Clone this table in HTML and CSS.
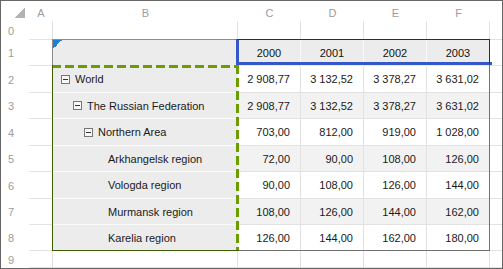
FILE: index.html
```html
<!DOCTYPE html>
<html>
<head>
<meta charset="utf-8">
<link rel="stylesheet" href="styles.css">
</head>
<body>
<div class="frame">
  <div class="stack">
  <div class="sheet">
    <!-- column letters -->
    <div class="corner"></div>
    <div class="colh">A</div>
    <div class="colh">B</div>
    <div class="colh">C</div>
    <div class="colh">D</div>
    <div class="colh">E</div>
    <div class="colh">F</div>
    <div class="colh"></div>

    <!-- row 0 -->
    <div class="rowh">0</div>
    <div class="cell"></div><div class="cell"></div><div class="cell"></div><div class="cell"></div><div class="cell"></div><div class="cell"></div><div class="cell last"></div>

    <!-- row 1 -->
    <div class="rowh">1</div>
    <div class="cell"></div>
    <div class="cell tcorner"></div>
    <div class="cell year">2000</div>
    <div class="cell year">2001</div>
    <div class="cell year">2002</div>
    <div class="cell year">2003</div>
    <div class="cell last"></div>

    <!-- row 2 -->
    <div class="rowh">2</div>
    <div class="cell"></div>
    <div class="cell label l0"><span class="tog"></span>World</div>
    <div class="cell num">2 908,77</div>
    <div class="cell num">3 132,52</div>
    <div class="cell num">3 378,27</div>
    <div class="cell num">3 631,02</div>
    <div class="cell last"></div>

    <!-- row 3 -->
    <div class="rowh">3</div>
    <div class="cell"></div>
    <div class="cell label l1"><span class="tog"></span>The Russian Federation</div>
    <div class="cell num alt">2 908,77</div>
    <div class="cell num alt">3 132,52</div>
    <div class="cell num alt">3 378,27</div>
    <div class="cell num alt">3 631,02</div>
    <div class="cell last"></div>

    <!-- row 4 -->
    <div class="rowh">4</div>
    <div class="cell"></div>
    <div class="cell label l2"><span class="tog"></span>Northern Area</div>
    <div class="cell num">703,00</div>
    <div class="cell num">812,00</div>
    <div class="cell num">919,00</div>
    <div class="cell num">1 028,00</div>
    <div class="cell last"></div>

    <!-- row 5 -->
    <div class="rowh">5</div>
    <div class="cell"></div>
    <div class="cell label leaf">Arkhangelsk region</div>
    <div class="cell num alt">72,00</div>
    <div class="cell num alt">90,00</div>
    <div class="cell num alt">108,00</div>
    <div class="cell num alt">126,00</div>
    <div class="cell last"></div>

    <!-- row 6 -->
    <div class="rowh">6</div>
    <div class="cell"></div>
    <div class="cell label leaf">Vologda region</div>
    <div class="cell num">90,00</div>
    <div class="cell num">108,00</div>
    <div class="cell num">126,00</div>
    <div class="cell num">144,00</div>
    <div class="cell last"></div>

    <!-- row 7 -->
    <div class="rowh">7</div>
    <div class="cell"></div>
    <div class="cell label leaf">Murmansk region</div>
    <div class="cell num alt">108,00</div>
    <div class="cell num alt">126,00</div>
    <div class="cell num alt">144,00</div>
    <div class="cell num alt">162,00</div>
    <div class="cell last"></div>

    <!-- row 8 -->
    <div class="rowh">8</div>
    <div class="cell"></div>
    <div class="cell label leaf">Karelia region</div>
    <div class="cell num">126,00</div>
    <div class="cell num">144,00</div>
    <div class="cell num">162,00</div>
    <div class="cell num">180,00</div>
    <div class="cell last"></div>

    <!-- row 9 -->
    <div class="rowh">9</div>
    <div class="cell"></div><div class="cell"></div><div class="cell"></div><div class="cell"></div><div class="cell"></div><div class="cell"></div><div class="cell last"></div>
  </div>

  <!-- selection overlays on an identical grid -->
  <div class="sheet overlay">
    <div class="tframe"></div>
    <div class="selrows"></div>
    <div class="selyears"></div>
  </div>
  </div>
</div>
</body>
</html>
```

FILE: styles.css
```css
* { box-sizing: border-box; }
html, body { margin: 0; padding: 0; background: #fff; }
body {
  font-family: "Liberation Sans", Arial, sans-serif;
  font-size: 11px;
  color: #1a1a1a;
}
.frame {
  width: 503px;
  height: 269px;
  border: 1px solid #666;
  overflow: hidden;
}
.stack { display: grid; }
.stack > .sheet { grid-area: 1 / 1; }
.sheet {
  display: grid;
  grid-template-columns: 28px 24px 185px 63px 63px 63px 63px 12px;
  grid-template-rows: 20px 19px 26px 27px 26px 27px 26px 27px 26px 26px 17px;
}
.overlay { pointer-events: none; }
.corner {
  background: linear-gradient(to bottom right, transparent 50%, #b3b3b3 50%) no-repeat;
  background-size: 11px 10px;
  background-position: 13px 7px;
}
.colh {
  color: #9c9c9c;
  display: flex;
  align-items: center;
  justify-content: center;
  padding-top: 3px;
}
.rowh {
  color: #9c9c9c;
  display: flex;
  align-items: center;
  padding-left: 7px;
}
.cell {
  border-right: 1px solid #e2e2e2;
  border-bottom: 1px solid #e2e2e2;
  display: flex;
  align-items: center;
  min-width: 0;
}
.cell.last { border-right: none; }
.tcorner {
  background: linear-gradient(135deg, #1c80d4 50%, transparent 50%) no-repeat, #ececec;
  background-size: 9px 9px, auto;
  border-bottom: none;
  border-right: none;
}
.year {
  background: #ececec;
  border-right-color: #fafafa;
  border-bottom: none;
  justify-content: center;
  color: #111;
}
.label {
  background: #ececec;
  border-bottom-color: #fbfbfb;
  border-right: none;
  white-space: nowrap;
  color: #1a1a1a;
}
.l0 { padding-left: 8px; }
.l1 { padding-left: 20px; }
.l2 { padding-left: 31px; }
.leaf { padding-left: 55px; }
.tog {
  width: 9px;
  height: 9px;
  border: 1px solid #777;
  background: #f7f7f7;
  margin-right: 5px;
  display: inline-flex;
  align-items: center;
  justify-content: center;
  flex: none;
}
.tog::after {
  content: "";
  width: 5px;
  height: 1px;
  background: #333;
}
.num {
  justify-content: flex-end;
  padding-right: 10px;
  color: #1a1a1a;
}
.num.alt { background: #f2f2f2; }

/* table outline */
.tframe {
  grid-column: 3 / 8;
  grid-row: 3 / 11;
  margin: -1px 0 0 -1px;
  border-top: 1px solid #8d8d8d;
  border-left: 1px solid #8d8d8d;
  border-right: 1px solid #727272;
  border-bottom: 1px solid #727272;
}
/* selected row headers: dashed top/right, olive left/bottom */
.selrows {
  grid-column: 3;
  grid-row: 4 / 11;
  margin: -1px -1px 0 -1px;
  border-left: 1px solid #3e5f00;
  border-bottom: 1px solid #3e5f00;
  background-origin: border-box;
  background-clip: border-box;
  background-image:
    repeating-linear-gradient(90deg, #6b9c00 0 9px, transparent 9px 13px),
    repeating-linear-gradient(180deg, #6b9c00 0 9px, transparent 9px 13px);
  background-size: calc(100% - 3px) 3px, 3px 100%;
  background-position: left top, right top;
  background-repeat: no-repeat;
}
/* selected column headers */
.selyears {
  grid-column: 4 / 8;
  grid-row: 3;
  margin: -1px 0 1px -2px;
  border-top: 1px solid #1f2a66;
  border-right: 1px solid #1f2a66;
  border-left: 3px solid #3457c9;
  border-bottom: 3px solid #3457c9;
  position: relative;
}
.selyears::after {
  content: "";
  position: absolute;
  right: -3px;
  bottom: -3px;
  width: 2px;
  height: 3px;
  background: #3457c9;
}
```
